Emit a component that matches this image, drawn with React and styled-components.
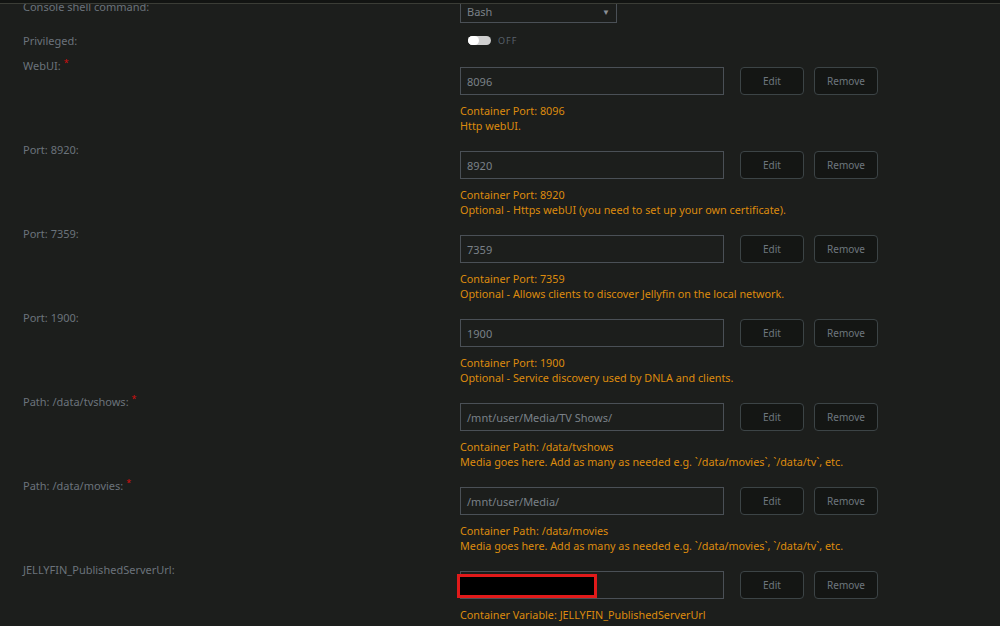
import styled, { createGlobalStyle } from "styled-components";

const GlobalStyle = createGlobalStyle`
    html, body {
        margin: 0;
        padding: 0;
        background: #1c1e1c;
        overflow: hidden;
    }
    body {
        font-family: "Noto Sans", "Open Sans", sans-serif;
    }
`;

const TopBar = styled.div`
    position: fixed;
    top: 0;
    left: 0;
    right: 0;
    height: 3px;
    background: #121412;
    border-bottom: 1px solid #3b3d36;
    z-index: 5;
`;

const Form = styled.div`
    margin-top: -2px;
    width: 1000px;
    height: 628px;
    overflow: hidden;
`;

const Row = styled.div`
    display: grid;
    grid-template-columns: 437px 1fr;
    padding-left: 23px;
    height: ${(p) => p.$height}px;
`;

const Label = styled.div`
    font-size: 11px;
    line-height: 17px;
    color: #6b737b;
`;

const Required = styled.span`
    color: #d01010;
    font-size: 9px;
    vertical-align: top;
    line-height: 12px;
    margin-left: 3px;
`;

const Control = styled.div`
    padding-top: ${(p) => p.$offset}px;
    display: flex;
    flex-direction: column;
`;

const Select = styled.div`
    width: 157px;
    height: 24px;
    box-sizing: border-box;
    border: 1px solid #4a5056;
    display: flex;
    align-items: center;
    justify-content: space-between;
    padding: 0 6px;
    font-size: 11px;
    color: #7a8188;
`;

const Caret = styled.span`
    font-size: 8px;
    color: #8a9096;
`;

const SwitchRow = styled.div`
    display: flex;
    align-items: center;
    gap: 7px;
    padding-left: 8px;
    height: 16px;
`;

const Track = styled.div`
    width: 23px;
    height: 9px;
    border-radius: 5px;
    background: #cfcfcf;
    display: flex;
`;

const Knob = styled.div`
    width: 11px;
    height: 9px;
    border-radius: 5px;
    background: #ffffff;
`;

const SwitchText = styled.span`
    font-size: 9px;
    letter-spacing: 1px;
    color: #59616a;
`;

const FieldLine = styled.div`
    display: flex;
    align-items: center;
    gap: 16px;
`;

const InputWrap = styled.div`
    position: relative;
`;

const Input = styled.div`
    width: 264px;
    height: 28px;
    box-sizing: border-box;
    border: 1px solid #4a5056;
    padding: 0 6px;
    display: flex;
    align-items: center;
    font-size: 11px;
    color: #7a8188;
`;

const Redacted = styled.div`
    position: absolute;
    left: -3px;
    top: 3px;
    width: 140px;
    height: 24px;
    box-sizing: border-box;
    background: #000;
    border: 3px solid #e01a1a;
`;

const Button = styled.button`
    width: 64px;
    height: 28px;
    box-sizing: border-box;
    background: #141614;
    border: 1px solid #3c4446;
    border-radius: 4px;
    color: #6e767e;
    font-family: inherit;
    font-size: 10px;
    padding: 0;
`;

const Buttons = styled.div`
    display: flex;
    gap: 10px;
`;

const Help = styled.div`
    margin-top: 8px;
    font-size: 10.8px;
    line-height: 15px;
    color: #dc8b0e;
`;

const mappings = [
    { label: "WebUI:", required: true, value: "8096", help: ["Container Port: 8096", "Http webUI."] },
    { label: "Port: 8920:", value: "8920", help: ["Container Port: 8920", "Optional - Https webUI (you need to set up your own certificate)."] },
    { label: "Port: 7359:", value: "7359", help: ["Container Port: 7359", "Optional - Allows clients to discover Jellyfin on the local network."] },
    { label: "Port: 1900:", value: "1900", help: ["Container Port: 1900", "Optional - Service discovery used by DNLA and clients."] },
    { label: "Path: /data/tvshows:", required: true, value: "/mnt/user/Media/TV Shows/", help: ["Container Path: /data/tvshows", "Media goes here. Add as many as needed e.g. `/data/movies`, `/data/tv`, etc."] },
    { label: "Path: /data/movies:", required: true, value: "/mnt/user/Media/", help: ["Container Path: /data/movies", "Media goes here. Add as many as needed e.g. `/data/movies`, `/data/tv`, etc."] },
    { label: "JELLYFIN_PublishedServerUrl:", value: "", hidden: true, help: ["Container Variable: JELLYFIN_PublishedServerUrl", "Set it to the address your clients use to reach the server."] },
];

const App = () => {
    return (
        <>
            <GlobalStyle />
            <TopBar />
            <Form>
                <Row $height={34}>
                    <Label>Console shell command:</Label>
                    <Control $offset={1}>
                        <Select>
                            Bash
                            <Caret>▼</Caret>
                        </Select>
                    </Control>
                </Row>

                <Row $height={25}>
                    <Label>Privileged:</Label>
                    <Control $offset={0}>
                        <SwitchRow>
                            <Track>
                                <Knob />
                            </Track>
                            <SwitchText>OFF</SwitchText>
                        </SwitchRow>
                    </Control>
                </Row>

                {mappings.map((m) => (
                    <Row key={m.label} $height={84}>
                        <Label>
                            {m.label}
                            {m.required && <Required>*</Required>}
                        </Label>
                        <Control $offset={10}>
                            <FieldLine>
                                <InputWrap>
                                    <Input>{m.value}</Input>
                                    {m.hidden && <Redacted />}
                                </InputWrap>
                                <Buttons>
                                    <Button>Edit</Button>
                                    <Button>Remove</Button>
                                </Buttons>
                            </FieldLine>
                            <Help>
                                {m.help[0]}
                                <br />
                                {m.help[1]}
                            </Help>
                        </Control>
                    </Row>
                ))}
            </Form>
        </>
    );
};

export default App;
